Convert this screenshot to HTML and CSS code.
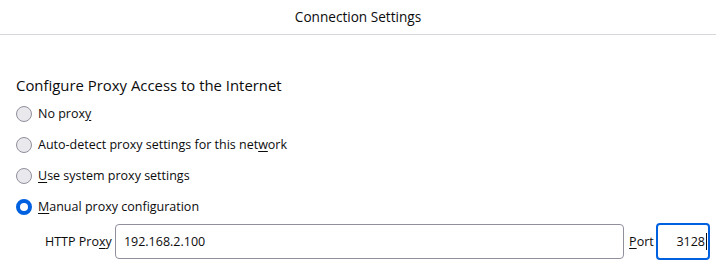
FILE: index.html
```html
<!DOCTYPE html>
<html>
<head>
<meta charset="utf-8">
<link rel="stylesheet" href="styles.css">
</head>
<body>
<div class="dialog">
  <header class="titlebar">Connection Settings</header>
  <main class="content">
    <h2 class="heading">Configure Proxy Access to the Internet</h2>
    <div class="options">
      <label class="option"><span class="radio"></span><span>No prox<u>y</u></span></label>
      <label class="option"><span class="radio"></span><span>Auto-detect proxy settings for this net<u>w</u>ork</span></label>
      <label class="option"><span class="radio"></span><span><u>U</u>se system proxy settings</span></label>
      <label class="option"><span class="radio checked"></span><span><u>M</u>anual proxy configuration</span></label>
    </div>
    <div class="proxy-row">
      <span class="field-label">HTTP Pro<u>x</u>y</span>
      <div class="input host">192.168.2.100</div>
      <span class="field-label port-label"><u>P</u>ort</span>
      <div class="input port focused">3128<span class="caret"></span></div>
    </div>
  </main>
</div>
</body>
</html>
```

FILE: styles.css
```css
* { box-sizing: border-box; }
html, body { margin: 0; padding: 0; background: #fff; }
body {
  font-family: "Open Sans", "Noto Sans", sans-serif;
  color: #0c0c0d;
  width: 716px;
  height: 267px;
  overflow: hidden;
}
.titlebar {
  height: 35px;
  border-bottom: 1px solid #d7d7db;
  display: flex;
  align-items: center;
  justify-content: center;
  font-size: 13.6px;
  padding-bottom: 2px;
}
.content { padding: 0 6px 0 16px; }
.heading {
  margin: 40px 0 0 0;
  font-size: 14.9px;
  font-weight: 400;
  line-height: 20px;
}
.options {
  display: flex;
  flex-direction: column;
  margin-top: 3px;
}
.option {
  display: flex;
  align-items: center;
  gap: 6px;
  height: 31px;
  font-size: 12.5px;
}
.option u, .field-label u { text-underline-offset: 2px; }
.radio {
  width: 16px;
  height: 16px;
  border-radius: 50%;
  border: 1px solid #8f8f9d;
  background: #e9e9ed;
  flex: none;
}
.radio.checked {
  border: 4px solid #0061e0;
  background: #fff;
}
.proxy-row {
  display: flex;
  align-items: center;
  margin-top: 1px;
  font-size: 12.5px;
}
.field-label { padding-left: 29px; width: 99px; }
.input {
  height: 35px;
  border: 1px solid #8f8f9d;
  border-radius: 4px;
  display: flex;
  align-items: center;
  font-size: 12.5px;
}
.host { width: 510px; padding-left: 8px; }
.port-label { padding-left: 5px; width: 32px; }
.port {
  width: 54px;
  height: 37px;
  border: 2px solid #0061e0;
  justify-content: flex-end;
  padding-right: 1px;
}
.caret {
  display: inline-block;
  width: 1px;
  height: 17px;
  background: #0c0c0d;
  margin-left: 1px;
}
```
